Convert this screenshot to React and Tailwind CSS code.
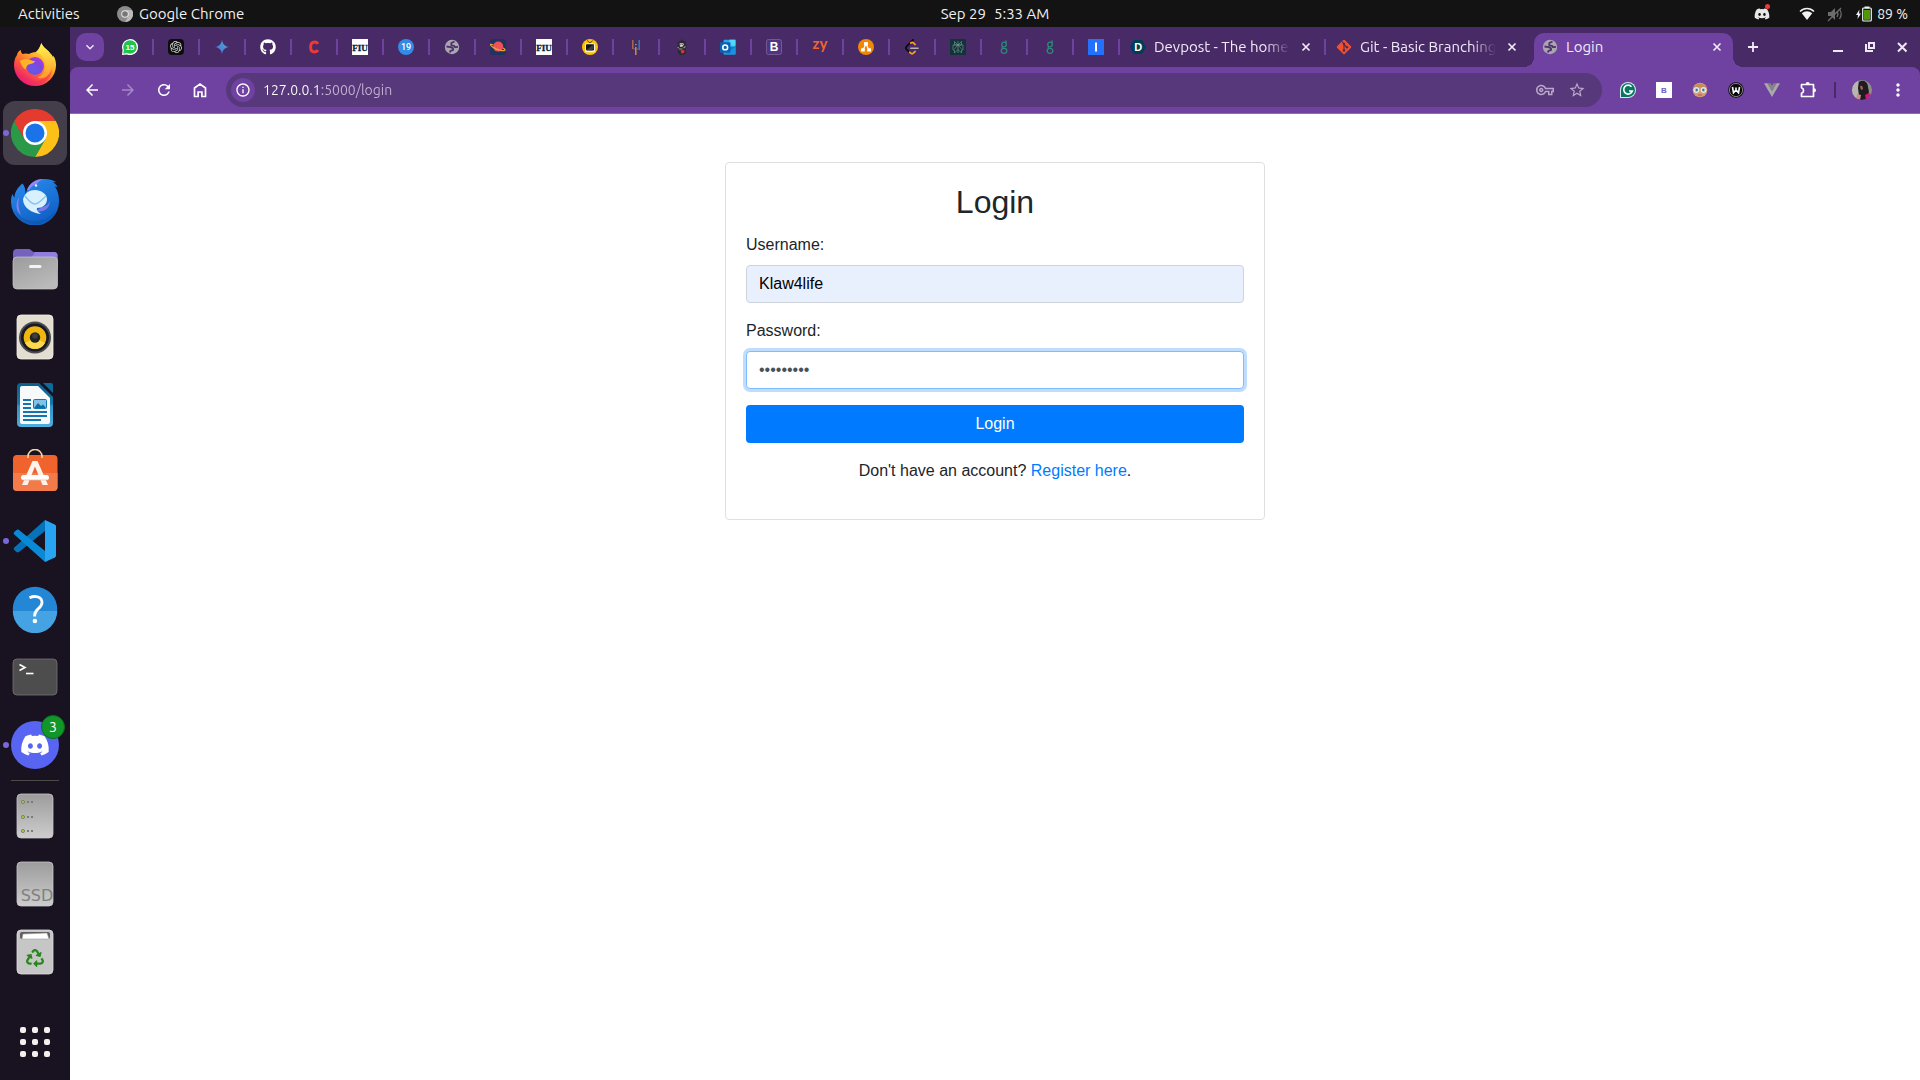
import { FaGithub, FaDiscord, FaRecycle } from "react-icons/fa"
import { SiOpenai } from "react-icons/si"
import {
  MdArrowBack,
  MdArrowForward,
  MdRefresh,
  MdStarBorder,
  MdMoreVert,
  MdOutlineVpnKey,
  MdInfoOutline,
  MdKeyboardArrowDown,
} from "react-icons/md"

const uiFont = "font-['Ubuntu','Noto_Sans',sans-serif]"
const pageFont = "font-['Liberation_Sans',Arial,sans-serif]"

/* favicons */

function WhatsApp() {
  return (
    <svg viewBox="0 0 16 16" className="size-4">
      <path d="M0 16l.6-5A8 8 0 1 1 5 15.500z" fill="#fff" />
      <circle cx="8" cy="8" r="6.800" fill="#1fc24a" />
      <path d="M1.300 14.800l.6-4 3.200 3.200z" fill="#1fc24a" />
      <text x="8" y="11" textAnchor="middle" fontSize="8" fontWeight="700" fontFamily="'Liberation Sans', sans-serif" fill="#fff">15</text>
    </svg>
  )
}

function ChatGpt() {
  return (
    <span className="flex size-4 items-center justify-center rounded-sm bg-[#0d0d10]">
      <SiOpenai className="size-3 text-[#d8d8d8]" />
    </span>
  )
}

function Gemini() {
  return (
    <svg viewBox="0 0 16 16" className="size-4">
      <defs>
        <linearGradient id="gem" x1="0" y1="1" x2="1" y2="0">
          <stop offset="0.2" stopColor="#4f78dc" />
          <stop offset="0.9" stopColor="#4aa9c9" />
        </linearGradient>
      </defs>
      <path d="M8 1C8.800 5.300 10.700 7.200 15 8 10.700 8.800 8.800 10.700 8 15 7.200 10.700 5.300 8.800 1 8 5.300 7.200 7.200 5.300 8 1z" fill="url(#gem)" />
    </svg>
  )
}

function Github() {
  return <FaGithub className="size-4 text-white" />
}

function Coursera() {
  return (
    <svg viewBox="0 0 16 16" className="size-4">
      <path d="M12 4.800C11 3.300 9.800 3 8.600 3 6 3 4.600 5.200 4.600 8s1.400 5 4 5c1.300 0 2.500-.5 3.400-1.800" fill="none" stroke="#ec3a35" strokeWidth="3" />
    </svg>
  )
}

function Fiu() {
  return (
    <svg viewBox="0 0 16 16" className="size-4">
      <rect width="16" height="16" fill="#fff" />
      <text x="8" y="11.500" textAnchor="middle" fontSize="9" fontWeight="700" fontFamily="'Liberation Serif', serif" fill="#081e3f" stroke="#081e3f" strokeWidth=".3">FIU</text>
    </svg>
  )
}

function Nineteen() {
  return (
    <svg viewBox="0 0 16 16" className="size-4">
      <circle cx="8" cy="8" r="8" fill="#318ce7" />
      <text x="8" y="11.200" textAnchor="middle" fontSize="9" fontWeight="500" fontFamily="Roboto, sans-serif" fill="#fff">19</text>
    </svg>
  )
}

function Globe() {
  return (
    <svg viewBox="0 0 16 16" className="size-4">
      <circle cx="8" cy="8" r="7.200" fill="#a9a7ad" />
      <path
        d="M10.500 2.500L7.300 4v2.300l2.700.5 1 1.400 3-.4M2.500 7.500l4 .6L9 9.300v1.900l-2.500.6-.7 1.700"
        fill="none"
        stroke="#4f2f70"
        strokeWidth="1.800"
        strokeLinejoin="round"
      />
    </svg>
  )
}

function Planet() {
  return (
    <svg viewBox="0 0 16 16" className="size-4">
      <rect width="16" height="16" rx="3" fill="#20335f" />
      <circle cx="8.200" cy="7.600" r="5" fill="#f0525a" />
      <path d="M3.300 6C1.200 5 .3 5 .5 5.800c.4 1.600 5.600 4.700 10 5.600 3 .6 4.800.3 4.500-.6-.2-.6-1-1.100-2-1.700" fill="none" stroke="#e8a23c" strokeWidth="1.200" />
    </svg>
  )
}

function Tv() {
  return (
    <svg viewBox="0 0 16 16" className="size-4">
      <circle cx="8" cy="8" r="8" fill="#fbc304" />
      <path d="M5.300 1.500L8 4.200l2.700-2.700" fill="none" stroke="#3c3524" strokeWidth="1" />
      <rect x="3" y="4.200" width="10" height="9" rx="1.500" fill="#f4f0e2" />
      <rect x="4" y="5.200" width="8" height="6.200" rx=".8" fill="#151515" />
      <path d="M4.300 11L11.700 5.500v4.300L10 11.200z" fill="#3d3d3d" />
    </svg>
  )
}

function Bars() {
  return (
    <svg viewBox="0 0 16 16" className="size-4">
      <path d="M4.800 1v9" stroke="#b07845" strokeWidth="1.300" />
      <path d="M7.800 5v1.300M7.800 8v8" stroke="#c98b4c" strokeWidth="1.500" />
      <path d="M11.200 1v10" stroke="#2186c4" strokeWidth="1.500" />
      <path d="M5.500 10h1.500M9 10h1.500" stroke="#7a6a8a" strokeWidth="1" />
    </svg>
  )
}

function Figure() {
  return (
    <svg viewBox="0 0 16 16" className="size-4">
      <path d="M8 0l1.300 2 2.700.5-.5 3 1.500 2.800-1.800 1.500 1.300 3.700L9.500 16H6l-2.500-2.500L4.800 10 2.500 8.500 4 6 3.300 3l3.200-.8z" fill="#2c2930" />
      <path d="M5.600 4.300h3.800l.5 1.500-1.500 2H6z" fill="#d8d5d8" />
      <path d="M6.500 5.600h.8M8.300 5.600h.8" stroke="#222" />
      <path d="M5 10h3.500M9.500 9l2-1.500M3.500 8.200l1.300.8" stroke="#9b949b" strokeWidth="1.200" />
      <path d="M6.500 11.300h4.200L10 14l-2.500.4z" fill="#d33a3c" />
    </svg>
  )
}

function Outlook() {
  return (
    <svg viewBox="0 0 16 16" className="size-4">
      <rect x="3.500" y="0.700" width="12" height="14.800" rx="1" fill="#28a8ea" />
      <path d="M9.500.7h6v6h-6z" fill="#50d9ff" />
      <path d="M4 8l11.500 7.500V8z" fill="#0f7ccb" />
      <path d="M4 15.500L15.500 8v7.500z" fill="#1b90df" />
      <rect x="0" y="3.200" width="10.500" height="10.500" rx="1" fill="#0a62b6" />
      <circle cx="5.200" cy="8.400" r="2.400" fill="none" stroke="#fff" strokeWidth="1.600" />
    </svg>
  )
}

function Bootstrap() {
  return (
    <svg viewBox="0 0 16 16" className="size-4">
      <rect x=".5" y=".5" width="15" height="15" rx="2" fill="#513480" stroke="#7c6499" strokeWidth="0.800" />
      <text x="8" y="12.300" textAnchor="middle" fontSize="12" fontWeight="700" fontFamily="'Liberation Sans', sans-serif" fill="#fff">B</text>
    </svg>
  )
}

function Zy() {
  return (
    <svg viewBox="0 0 16 16" className="size-4 overflow-visible">
      <text x="8" y="10" textAnchor="middle" fontSize="15" fontWeight="700" fontFamily="Lato, sans-serif" fill="#f0652a">zy</text>
    </svg>
  )
}

function Diagrams() {
  return (
    <svg viewBox="0 0 16 16" className="size-4">
      <circle cx="8" cy="8" r="8" fill="#f08705" />
      <path d="M8 5L5 11M8 5l3 6" stroke="#fff" strokeWidth="1.200" />
      <rect x="6" y="3" width="4" height="3.500" rx=".5" fill="#fff" />
      <rect x="3" y="9.200" width="3.800" height="3.300" rx=".5" fill="#fff" />
      <rect x="9.200" y="9.200" width="3.800" height="3.300" rx=".5" fill="#fff" />
    </svg>
  )
}

function LeetCode() {
  return (
    <svg viewBox="0 0 16 16" className="size-4">
      <path d="M9 1L2.500 7.500c-.7.800-.7 2 0 2.800l3 3" fill="none" stroke="#0d0a12" strokeWidth="1.800" strokeLinecap="round" />
      <path d="M6.800 4c1-.8 2-.7 2.900.1L11 5.500M5.800 13.300l.6.600c.9.900 2.400.9 3.300 0l1.300-1.400" fill="none" stroke="#ffa116" strokeWidth="1.800" strokeLinecap="round" />
      <path d="M6.800 9.300H14" stroke="#b3b3b3" strokeWidth="1.600" strokeLinecap="round" />
    </svg>
  )
}

function Perplexity() {
  return (
    <svg viewBox="0 0 16 16" className="size-4">
      <rect width="16" height="16" fill="#123338" />
      <path d="M8 2v12M4.500 2.500L8 6l3.500-3.500V6h-7zM3 6h10v5h-1.500v3L8 10.500 4.500 14v-3H3zM4.500 10L8 6l3.500 4" fill="none" stroke="#7c9b98" strokeWidth="0.600" />
    </svg>
  )
}

function GreenG() {
  return (
    <svg viewBox="0 0 16 16" className="size-4">
      <g fill="none" stroke="#2b8a7c" strokeWidth="1.300">
        <circle cx="8" cy="5.500" r="2.300" />
        <path d="M9.500 3.800L10.300 1.500M9.800 2.800h1M6.800 7.600c-1 .8-.9 1.400.2 1.900" />
        <ellipse cx="8" cy="11.800" rx="2.800" ry="2.500" />
      </g>
    </svg>
  )
}

function Indeed() {
  return (
    <svg viewBox="0 0 16 16" className="size-4">
      <rect width="16" height="16" fill="#2470ff" />
      <rect x="7" y="3.500" width="2" height="9" fill="#fff" />
    </svg>
  )
}

function Devpost() {
  return (
    <svg viewBox="0 0 16 16" className="size-4 shrink-0">
      <path d="M4 1h8l4 7-4 7H4L0 8z" fill="#003e54" />
      <text x="8.200" y="12" textAnchor="middle" fontSize="11" fontWeight="700" fontFamily="'Liberation Sans', sans-serif" fill="#fff">D</text>
    </svg>
  )
}

function Git() {
  return (
    <svg viewBox="0 0 16 16" className="size-4 shrink-0">
      <rect x="2.600" y="2.600" width="10.800" height="10.800" rx="1" transform="rotate(45 8 8)" fill="#f1502f" />
      <path d="M6 2.500L8 5v6.500M8 5.500l3 2.800" fill="none" stroke="#4b2a52" strokeWidth="1.100" />
      <circle cx="8" cy="5" r="1.200" fill="#4b2a52" />
      <circle cx="8" cy="11.500" r="1.300" fill="#4b2a52" />
      <circle cx="11" cy="8.300" r="1.200" fill="#4b2a52" />
    </svg>
  )
}

const pinnedTabs = [
  { name: "WhatsApp", Icon: WhatsApp },
  { name: "ChatGPT", Icon: ChatGpt },
  { name: "Gemini", Icon: Gemini },
  { name: "GitHub", Icon: Github },
  { name: "Coursera", Icon: Coursera },
  { name: "FIU", Icon: Fiu },
  { name: "Calendar", Icon: Nineteen },
  { name: "Site", Icon: Globe },
  { name: "Planet", Icon: Planet },
  { name: "FIU Portal", Icon: Fiu },
  { name: "TV", Icon: Tv },
  { name: "Bars", Icon: Bars },
  { name: "Figure", Icon: Figure },
  { name: "Outlook", Icon: Outlook },
  { name: "Bootstrap", Icon: Bootstrap },
  { name: "zyBooks", Icon: Zy },
  { name: "Diagrams", Icon: Diagrams },
  { name: "LeetCode", Icon: LeetCode },
  { name: "Perplexity", Icon: Perplexity },
  { name: "Grepper", Icon: GreenG },
  { name: "Grepper 2", Icon: GreenG },
  { name: "Indeed", Icon: Indeed },
]

/* dock icons */

function Firefox() {
  return (
    <svg viewBox="0 0 48 48" className="size-12">
      <defs>
        <linearGradient id="ffBody" x1="0.85" y1="0.1" x2="0.25" y2="0.95">
          <stop offset="0" stopColor="#fff04a" />
          <stop offset="0.35" stopColor="#ffb02a" />
          <stop offset="0.65" stopColor="#ff5f35" />
          <stop offset="1" stopColor="#e8157c" />
        </linearGradient>
        <linearGradient id="ffTail" x1="0" y1="0" x2="0" y2="1">
          <stop offset="0" stopColor="#fff44f" />
          <stop offset="1" stopColor="#ff9a2b" />
        </linearGradient>
        <radialGradient id="ffCore" cx="0.4" cy="0.75" r="0.8">
          <stop offset="0" stopColor="#5f5be8" />
          <stop offset="0.6" stopColor="#8146dd" />
          <stop offset="1" stopColor="#b633e0" />
        </radialGradient>
      </defs>
      <path d="M6 14c.3-2 1.300-4 3.800-5 .2 2 .7 3 1.700 4 2-.8 4.500-.8 6.500 0 1.800-1 4-2 7-2 4-3 4-6 5.500-9 1.500 5 5.500 6 8 9.500C41 14 41.500 15 42 16c.3-.3.300-1 .2-1.500C44.500 18 45 21 45 24.500A21 20.500 0 0 1 3 24.500C3 20 4 16.500 6 14z" fill="url(#ffBody)" />
      <path d="M25 11c3-2.500 4-6 5.500-9 1.500 5 5.500 6 8 9.500 4 6.500 3.500 18-3 24-3 2-7 2-9 1 8-3 9-12 6-19-1.500-3.500-4-5-7.500-6.500z" fill="url(#ffTail)" />
      <circle cx="24" cy="25" r="9" fill="url(#ffCore)" />
      <path d="M9 20c3-2 6-2.500 9-1.500 2 .8 3.500 1.500 6 1.500-.5 2.500-4 3-6.500 3.500-2 1-2.500 3-2.500 5-2.500-1-5-4-6-8.500z" fill="#ffb224" />
      <path d="M5 29c4 9 12 13 21 11 7-1 13-6 15-12-1 10-8 16-17 16S6.500 38 5 29z" fill="#f62d5a" opacity=".55" />
    </svg>
  )
}

function Chrome() {
  return (
    <svg viewBox="0 0 48 48" className="size-12">
      <path d="M24 24L3.200 12A24 24 0 0 1 44.800 12z" fill="#e33b2e" />
      <path d="M24 12h20.800A24 24 0 0 1 24 48l10.400-18z" fill="#fcc016" />
      <path d="M3.200 12A24 24 0 0 0 24 48l10.400-18-10.400 6-10.400-6z" fill="#2a9a48" />
      <path d="M3.200 12h22v12H13.600V30z" fill="#e33b2e" />
      <path d="M3.200 12L13.600 30 20 24z" fill="#e33b2e" />
      <circle cx="24" cy="24" r="12" fill="#fff" />
      <circle cx="24" cy="24" r="9.500" fill="#1a73e8" />
    </svg>
  )
}

function Thunderbird() {
  return (
    <svg viewBox="0 0 48 48" className="size-12">
      <defs>
        <linearGradient id="tb" x1="0" y1="0" x2="0.5" y2="1">
          <stop offset="0" stopColor="#2b8ff0" />
          <stop offset="1" stopColor="#1060c4" />
        </linearGradient>
      </defs>
      <path d="M16 13C19 5 26 2 33 2c5 0 9 1 12 3l-3 .5c2 .8 3.500 2.500 4.500 4.500l-2.500-.5c3 4.500 4 9 4 14.500a24 24 0 0 1-48 1C0 21 .5 19 1.500 17c.5 1.500 1 2.500 2 3.500 0-5 3-10 8-14 2.500 3 3.500 7 2.500 11z" fill="url(#tb)" />
      <path d="M16 13C19 5 26 2 33 2c-4 1-6 3-7 5-3 .5-6 2.500-8 6z" fill="#9a83f2" />
      <path d="M8 20c-4 7-3 14 2 18-3-6-3-12-2-18z" fill="#8d7cf0" />
      <path d="M31 30c4-.5 7-3 8-6-.5 8-7 12-14 10z" fill="#7d78ea" />
      <path d="M12 22c2-6 6-9 12-9s12 4 12 9c0 6-5 9-10 9-1 2 1 4 4 6-9-1-18-6-18-15z" fill="#d9f0ff" />
      <path d="M14 19c3 4 7 8 10 8s7-4 11-8" fill="none" stroke="#8ac2ee" strokeWidth="1.300" />
      <circle cx="25" cy="8.500" r="1.200" fill="#e8f6ff" />
      <path d="M3 32c5 9 13 12 21 12s17-4 21-12c-3 10-12 15.500-21 15.500S6 42 3 32z" fill="#0b4fa8" opacity=".5" />
    </svg>
  )
}

function Files() {
  return (
    <svg viewBox="0 0 48 48" className="size-12">
      <defs>
        <linearGradient id="fl" x1="0" y1="0" x2="0.6" y2="1">
          <stop offset="0" stopColor="#9b9b9b" />
          <stop offset="1" stopColor="#bababa" />
        </linearGradient>
      </defs>
      <path d="M2 8a4 4 0 0 1 4-4h12c2 0 3 3 5 3h20a3.500 3.500 0 0 1 3.500 3.500V24H2z" fill="#7461c0" />
      <path d="M24 7h19a3.500 3.500 0 0 1 3.500 3.500V20H16z" fill="#8f7de0" />
      <rect x="2" y="12" width="44.500" height="32" rx="4" fill="url(#fl)" stroke="#c9c9c9" strokeWidth=".7" />
      <rect x="18" y="20" width="12.500" height="3" rx="1.500" fill="#f4f4f4" />
    </svg>
  )
}

function Rhythmbox() {
  return (
    <svg viewBox="0 0 48 48" className="size-12">
      <rect x="6" y="2" width="36" height="44" rx="4" fill="#e4ded1" stroke="#f4f1ea" strokeWidth=".8" />
      <circle cx="24" cy="24.500" r="16" fill="#4a4a50" />
      <circle cx="24" cy="24.500" r="14" fill="#1a1a22" />
      <circle cx="24" cy="24.500" r="11.300" fill="#f0b80f" />
      <path d="M14 30a11.300 11.300 0 0 0 20 0l-10-5z" fill="#fad94c" />
      <circle cx="24" cy="24.500" r="5.200" fill="#222" />
      <circle cx="24" cy="23" r="2.800" fill="#3f3f3f" />
    </svg>
  )
}

function Writer() {
  return (
    <svg viewBox="0 0 48 48" className="size-12">
      <defs>
        <linearGradient id="wr" x1="0" y1="0" x2="0" y2="1">
          <stop offset="0" stopColor="#0a5f8c" />
          <stop offset="0.48" stopColor="#1579ab" />
          <stop offset="0.52" stopColor="#2f93c5" />
          <stop offset="1" stopColor="#4eaedd" />
        </linearGradient>
      </defs>
      <path d="M10 2h18l14 14v26a4 4 0 0 1-4 4H10a4 4 0 0 1-4-4V6a4 4 0 0 1 4-4z" fill="url(#wr)" />
      <path d="M32 2h8a2 2 0 0 1 2 2v8z" fill="#0e6a9b" />
      <path d="M11 5h16l12 12v24a2 2 0 0 1-2 2H11a2 2 0 0 1-2-2V7a2 2 0 0 1 2-2z" fill="#f7f9fa" />
      <path d="M12 19h8M12 23h8M12 27h8M12 31h24M12 35h24M12 39h18" stroke="#1177b0" strokeWidth="2" />
      <rect x="22.500" y="18.500" width="13" height="9" rx="1" fill="#7fc3e8" stroke="#1177b0" />
      <path d="M23 27l4-5 3 3 2-1.500L35 27z" fill="#0d6da3" />
    </svg>
  )
}

function Software() {
  return (
    <svg viewBox="0 0 48 48" className="size-12">
      <rect x="2" y="6" width="44.500" height="36" rx="4" fill="#f0632d" />
      <path d="M2 24h44.500v14a4 4 0 0 1-4 4H6a4 4 0 0 1-4-4z" fill="#f37a49" />
      <path d="M17 9V7.500a7 7 0 0 1 14 0V9" fill="none" stroke="#f2d9a0" strokeWidth="1.600" />
      <path d="M21.500 12h5L37 36h-5.500L24 17.500 16.500 36H11z" fill="#fdf3ec" />
      <rect x="10" y="26" width="28" height="5" rx="2.500" fill="#fff" />
      <path d="M12 31h24" stroke="#e4bda9" strokeWidth=".8" />
    </svg>
  )
}

function VsCode() {
  return (
    <svg viewBox="0 0 48 48" className="size-12">
      <path d="M34 3v11L8 35c-1 .7-1.800.6-2.500 0L3.300 33c-.8-.8-.8-1.800 0-2.500z" fill="#0672ba" />
      <path d="M34 45V34L8 13c-1-.7-1.800-.6-2.500 0L3.300 15c-.8.800-.8 1.800 0 2.500z" fill="#0a8ad6" />
      <path d="M34 3l9.800 4.500c.8.400 1.200 1 1.200 1.800v29.400c0 .8-.4 1.400-1.200 1.800L34 45z" fill="#27a5f2" />
    </svg>
  )
}

function Help() {
  return (
    <svg viewBox="0 0 48 48" className="size-12">
      <circle cx="24" cy="24" r="22.200" fill="#2487d6" />
      <path d="M1.800 26a22.200 22.200 0 0 0 44.400 0z" fill="#45a3e3" />
      <path d="M18.500 12.800c6-2.800 12.500-.8 12.500 4.700 0 6-7.300 6.300-7.300 12.500v1.500" fill="none" stroke="#fff" strokeWidth="2.800" />
      <circle cx="23.900" cy="36" r="2.300" fill="#fff" />
    </svg>
  )
}

function Terminal() {
  return (
    <svg viewBox="0 0 48 48" className="size-12">
      <rect x="2" y="6" width="44" height="36" rx="4" fill="#4d4d4d" stroke="#757575" strokeWidth=".8" />
      <path d="M8.500 11.500l5.500 3-5.500 3" fill="none" stroke="#fff" strokeWidth="1.600" />
      <path d="M15 20.500h7.500" stroke="#fff" strokeWidth="1.600" />
    </svg>
  )
}

function Discord() {
  return (
    <span className="flex size-12 items-center justify-center rounded-full bg-[#5865f2]">
      <FaDiscord className="size-[30px] text-white" />
    </span>
  )
}

function DriveShape() {
  return (
    <>
      <defs>
        <linearGradient id="dr" x1="0" y1="0" x2="0" y2="1">
          <stop offset="0" stopColor="#9c9c9c" />
          <stop offset="1" stopColor="#cdcdcd" />
        </linearGradient>
      </defs>
      <rect x="6" y="2" width="36" height="44" rx="4" fill="url(#dr)" stroke="#c6c6c6" strokeWidth=".8" />
    </>
  )
}

function Drive() {
  return (
    <svg viewBox="0 0 48 48" className="size-12">
      <DriveShape />
      {[10, 25, 39].map((y) => (
        <g key={y}>
          <circle cx="12" cy={y} r="1.600" fill="#a5c94a" stroke="#6e7a55" strokeWidth=".8" />
          <path d={`M16 ${y}h2M20 ${y}h2`} stroke="#7b7b7b" strokeWidth="1.800" />
        </g>
      ))}
    </svg>
  )
}

function Ssd() {
  return (
    <svg viewBox="0 0 48 48" className="size-12">
      <DriveShape />
      <text x="26" y="41" textAnchor="middle" fontSize="16" fontFamily="'DejaVu Sans', sans-serif" fill="#808080">SSD</text>
    </svg>
  )
}

function Trash() {
  return (
    <div className="relative">
      <svg viewBox="0 0 48 48" className="size-12">
        <rect x="6" y="2" width="36" height="44" rx="4" fill="#c6c6c6" stroke="#dedede" strokeWidth=".8" />
        <rect x="9" y="4" width="30" height="7" rx="2" fill="#5e5e5e" />
        <path d="M11 11l1-5 24-1 2 6z" fill="#fff" stroke="#9d9d9d" strokeWidth=".6" />
      </svg>
      <FaRecycle className="absolute top-[21px] left-[15px] size-[18px] text-[#27871b]" />
    </div>
  )
}

const dockApps = [
  { name: "Firefox", Icon: Firefox },
  { name: "Google Chrome", Icon: Chrome, running: true, active: true },
  { name: "Thunderbird", Icon: Thunderbird },
  { name: "Files", Icon: Files },
  { name: "Rhythmbox", Icon: Rhythmbox },
  { name: "LibreOffice Writer", Icon: Writer },
  { name: "Software", Icon: Software },
  { name: "Visual Studio Code", Icon: VsCode, running: true },
  { name: "Help", Icon: Help },
  { name: "Terminal", Icon: Terminal },
  { name: "Discord", Icon: Discord, running: true, badge: "3" },
]

const dockPlaces = [
  { name: "Drive", Icon: Drive },
  { name: "SSD", Icon: Ssd },
  { name: "Trash", Icon: Trash },
]

function DockItem({ name, Icon, running, active, badge }) {
  return (
    <button
      type="button"
      aria-label={name}
      className={`relative flex size-16 items-center justify-center rounded-xl ${active ? "bg-[#443d4a]" : ""}`}
    >
      {running && <span className="absolute top-[29px] left-0 size-1.5 rounded-full bg-[#7b67da]" />}
      <Icon />
      {badge && (
        <span className="absolute top-0.5 right-0.5 flex size-6 items-center justify-center rounded-full border border-[#0b6e1b] bg-[#12962a] text-sm text-white">
          {badge}
        </span>
      )}
    </button>
  )
}

function Dock() {
  return (
    <nav className="flex w-[70px] shrink-0 flex-col items-center bg-[#191221] py-1.5">
      <div className="flex flex-col gap-1">
        {dockApps.map((app) => (
          <DockItem key={app.name} {...app} />
        ))}
      </div>
      <hr className="my-[3px] w-12 border-[#4d4a48]" />
      <div className="flex flex-col gap-1">
        {dockPlaces.map((place) => (
          <DockItem key={place.name} {...place} />
        ))}
      </div>
      <button type="button" aria-label="Show Applications" className="mt-auto flex size-16 items-center justify-center">
        <span className="grid grid-cols-3 gap-1.5">
          {[1, 2, 3, 4, 5, 6, 7, 8, 9].map((n) => (
            <span key={n} className="size-1.5 rounded-[2px] bg-[#f2f1ee]" />
          ))}
        </span>
      </button>
    </nav>
  )
}

function TopBar() {
  return (
    <header className="grid h-[27px] grid-cols-[70px_1fr_auto_1fr] items-center bg-[#131313] text-[15px] leading-5 text-[#f0f0f0]">
      <span className="pl-[18px] whitespace-nowrap">Activities</span>
      <div className="flex items-center gap-1.5 pl-[47px]">
        <svg viewBox="0 0 16 16" className="size-4">
          <circle cx="8" cy="8" r="8" fill="#8b8b8b" />
          <path d="M8 4h7A8 8 0 0 1 8 16l3.500-6z" fill="#b9b9b9" />
          <circle cx="8" cy="8" r="3.800" fill="#e6e6e6" />
          <circle cx="8" cy="8" r="2.800" fill="#777" />
        </svg>
        <span>Google Chrome</span>
      </div>
      <div className="flex gap-2">
        <span>Sep 29</span>
        <span>5:33 AM</span>
      </div>
      <div className="flex items-center justify-end pr-3">
        <span className="relative mr-[29px]">
          <FaDiscord className="size-4 text-[#e8e8e8]" />
          <span className="absolute -top-0.5 right-0 size-[5px] rounded-full bg-[#ea3b3b]" />
        </span>
        <svg viewBox="0 0 16 16" className="mr-3 size-4">
          <path d="M1 5.500C5 1.500 11 1.500 15 5.500" fill="none" stroke="#f2f2f2" strokeWidth="1.500" />
          <path d="M2.800 7.300C5.800 4.600 10.200 4.600 13.200 7.300L8 14z" fill="#f2f2f2" />
        </svg>
        <svg viewBox="0 0 16 16" className="mr-3 size-4">
          <path d="M1 6h3l4-4v12l-4-4H1z" fill="#6c6c6c" />
          <path d="M10 5c1.200 2 1.200 4 0 6M12.500 3c2 3 2 7 0 10M1 15L14 2" fill="none" stroke="#6c6c6c" strokeWidth="1.300" />
        </svg>
        <svg viewBox="0 0 18 16" className="mr-1 h-4 w-[18px]">
          <path d="M4.500 3.500L1 9h2l-.5 4L6 7.500H4z" fill="#f2f2f2" />
          <rect x="9.500" y="0.500" width="5" height="2" fill="#f2f2f2" />
          <rect x="7.700" y="2" width="8.600" height="13" rx="1" fill="none" stroke="#f2f2f2" strokeWidth="1.200" />
          <rect x="9" y="4" width="6" height="9.800" fill="#4e9a06" />
        </svg>
        <span className="text-sm">89 %</span>
      </div>
    </header>
  )
}

function CloseIcon() {
  return (
    <svg viewBox="0 0 16 16" className="size-4">
      <path d="M4.500 4.500l7 7M11.500 4.500l-7 7" stroke="#f1eaf7" strokeWidth="1.700" />
    </svg>
  )
}

function Tab({ title, Icon, separator }) {
  return (
    <div className="flex w-[206px] items-center pl-2.5">
      <Icon />
      <span className="ml-2 w-[136px] shrink-0 whitespace-nowrap [mask-image:linear-gradient(90deg,#000_82%,transparent)]">
        {title}
      </span>
      <button type="button" aria-label={`Close ${title}`} className="ml-2">
        <CloseIcon />
      </button>
      {separator && <span className="ml-auto h-4 w-0.5 bg-[#6f41a1]" />}
    </div>
  )
}

function TabStrip() {
  return (
    <div className="flex h-10 bg-[#482a66] pl-1.5 text-[15px] leading-5 text-[#f1eaf7]">
      <button
        type="button"
        aria-label="Search tabs"
        className="mt-1.5 mr-1 flex size-7 items-center justify-center rounded-[10px] bg-[#6f41a1]"
      >
        <MdKeyboardArrowDown className="size-4" />
      </button>
      <div className="flex">
        {pinnedTabs.map(({ name, Icon }) => (
          <button key={name} type="button" aria-label={name} className="flex w-[46px] items-center">
            <span className="flex flex-1 justify-center">
              <Icon />
            </span>
            <span className="h-4 w-0.5 bg-[#6f41a1]" />
          </button>
        ))}
        <Tab title="Devpost - The home" Icon={Devpost} separator />
        <Tab title="Git - Basic Branching" Icon={Git} />
      </div>
      <div className="relative mt-1.5 ml-0.5 flex h-[34px] w-[199px] items-center rounded-t-[10px] bg-[#6f41a1] pr-2 pb-1.5 pl-2">
        <span className="absolute bottom-0 -left-2.5 size-2.5 bg-[radial-gradient(circle_at_0_0,#482a66_10px,#6f41a1_10px)]" />
        <span className="absolute -right-2.5 bottom-0 size-2.5 bg-[radial-gradient(circle_at_100%_0,#482a66_10px,#6f41a1_10px)]" />
        <Globe />
        <span className="ml-2">Login</span>
        <button type="button" aria-label="Close Login" className="ml-auto">
          <CloseIcon />
        </button>
      </div>
      <div className="flex flex-1 items-center pr-2.5 pl-3">
        <button type="button" aria-label="New tab">
          <svg viewBox="0 0 16 16" className="size-4">
            <path d="M8 3v10M3 8h10" stroke="#f1eaf7" strokeWidth="1.800" />
          </svg>
        </button>
        <div className="ml-auto flex items-center gap-4">
          <button type="button" aria-label="Minimize">
            <svg viewBox="0 0 16 16" className="size-4">
              <path d="M3 12h10" stroke="#efe8f5" strokeWidth="2" />
            </svg>
          </button>
          <button type="button" aria-label="Restore">
            <svg viewBox="0 0 16 16" className="size-4">
              <path d="M7 4h5v5H7z" fill="none" stroke="#efe8f5" strokeWidth="2" />
              <path d="M4 5v7h7" fill="none" stroke="#efe8f5" strokeWidth="2" />
            </svg>
          </button>
          <button type="button" aria-label="Close window">
            <svg viewBox="0 0 16 16" className="size-4">
              <path d="M4 4l8.500 8.500M12.500 4L4 12.500" stroke="#efe8f5" strokeWidth="2" />
            </svg>
          </button>
        </div>
      </div>
    </div>
  )
}

function Grammarly() {
  return (
    <svg viewBox="0 0 16 16" className="size-4">
      <path d="M8 0a8 8 0 1 1 0 16H0V8a8 8 0 0 1 8-8z" fill="#d8e9e4" />
      <path d="M8 1a7 7 0 1 1 0 14H1V8a7 7 0 0 1 7-7z" fill="#067862" />
      <path d="M11.500 4.800A4.400 4.400 0 1 0 12.300 9H9" fill="none" stroke="#fff" strokeWidth="1.700" />
    </svg>
  )
}

function BootstrapExt() {
  return (
    <svg viewBox="0 0 16 16" className="size-4">
      <rect width="16" height="16" fill="#fff" />
      <text x="8" y="11" textAnchor="middle" fontSize="8" fontWeight="700" fontFamily="'Liberation Sans', sans-serif" fill="#6a5cc0">B</text>
    </svg>
  )
}

function Face() {
  return (
    <svg viewBox="0 0 16 16" className="size-4">
      <circle cx="8" cy="8" r="7.300" fill="#d99a73" />
      <path d="M1 7a7.300 7.300 0 0 1 14 0C11 4.500 5 4.500 1 7z" fill="#c68d58" />
      <circle cx="4.400" cy="8" r="2.500" fill="#9cc6d8" stroke="#f5f5f5" />
      <circle cx="11.600" cy="8" r="2.500" fill="#9cc6d8" stroke="#f5f5f5" />
      <circle cx="4.800" cy="8" r="1" fill="#356d85" />
      <circle cx="11.200" cy="8" r="1" fill="#356d85" />
      <path d="M6 13h4" stroke="#a85b4a" />
    </svg>
  )
}

function Wappalyzer() {
  return (
    <svg viewBox="0 0 16 16" className="size-4">
      <circle cx="8" cy="8" r="7.800" fill="#0a0a0a" />
      <circle cx="8" cy="8" r="6.600" fill="none" stroke="#d0d0d0" strokeWidth=".6" />
      <path d="M4.500 5l1 5.800L8 8l2.500 2.800 1-5.800M8 5.500V8" fill="none" stroke="#fff" strokeWidth="1.600" />
    </svg>
  )
}

function Vue() {
  return (
    <svg viewBox="0 0 16 16" className="size-4">
      <path d="M0 1.200h3.500L8 9l4.500-7.800H16L8 15z" fill="#a9a9a9" />
      <path d="M3.500 1.200h3L8 3.800l1.500-2.600h3L8 9z" fill="#858585" />
    </svg>
  )
}

function Puzzle() {
  return (
    <svg viewBox="0 0 18 18" className="size-[18px]">
      <path d="M2.500 3.500h12v12h-12v-3.300a2.800 2.800 0 0 0 0-5.400z" fill="none" stroke="#fff" strokeWidth="1.700" strokeLinejoin="round" />
      <path d="M6.700 3a2 2 0 0 1 4 0zM15 7.300a2 2 0 0 1 0 4z" fill="#fff" />
    </svg>
  )
}

const extensions = [
  { name: "Grammarly", Icon: Grammarly },
  { name: "Bootstrap", Icon: BootstrapExt },
  { name: "Face", Icon: Face },
  { name: "Wappalyzer", Icon: Wappalyzer },
  { name: "Vue devtools", Icon: Vue },
  { name: "Extensions", Icon: Puzzle },
]

function NavButton({ label, children }) {
  return (
    <button type="button" aria-label={label} className="flex size-9 items-center justify-center">
      {children}
    </button>
  )
}

function Toolbar() {
  return (
    <div className="bg-[#482a66]">
      <div className="flex h-[47px] items-center rounded-t-lg border-b border-[#8f68ba] bg-[#6f41a1] pl-1 text-white">
        <NavButton label="Back">
          <MdArrowBack className="size-[18px]" />
        </NavButton>
        <NavButton label="Forward">
          <MdArrowForward className="size-[18px] text-[#a588c6]" />
        </NavButton>
        <NavButton label="Reload">
          <MdRefresh className="size-[18px]" />
        </NavButton>
        <NavButton label="Home">
          <svg viewBox="0 0 18 18" className="size-[18px]">
            <path d="M3.500 7L9 3l5.500 4v8.500h-3.600V11H7.100v4.500H3.500z" fill="none" stroke="#fff" strokeWidth="1.700" />
          </svg>
        </NavButton>
        <div className="ml-2 flex h-[34px] flex-1 items-center rounded-full bg-[#57387a] pr-4 pl-[5px]">
          <button type="button" aria-label="Site information" className="flex size-6 items-center justify-center rounded-full bg-[#6f41a1]">
            <MdInfoOutline className="size-4" />
          </button>
          <input
            aria-label="Address bar"
            defaultValue="127.0.0.1:5000/login"
            className="ml-2 flex-1 bg-[linear-gradient(90deg,#fff_57px,#c3b2d4_57px)] bg-clip-text text-sm text-transparent outline-none"
          />
          <button type="button" aria-label="Passwords" className="mr-3.5">
            <MdOutlineVpnKey className="size-[18px] text-[#b9a8cb]" />
          </button>
          <button type="button" aria-label="Bookmark">
            <MdStarBorder className="size-[18px] text-[#b9a8cb]" />
          </button>
        </div>
        <div className="ml-2 flex">
          {extensions.map(({ name, Icon }) => (
            <NavButton key={name} label={name}>
              <Icon />
            </NavButton>
          ))}
        </div>
        <span className="mx-2 h-4 w-0.5 bg-[#482a66]" />
        <NavButton label="Profile">
          <svg viewBox="0 0 20 20" className="size-5">
            <defs>
              <clipPath id="av">
                <circle cx="10" cy="10" r="10" />
              </clipPath>
            </defs>
            <g clipPath="url(#av)">
              <rect width="20" height="20" fill="#8e8f86" />
              <path d="M0 0h6v20H0z" fill="#b7b6b2" />
              <path d="M7 2c4-3 9 0 9 5l1 5-3 8H6l1-6-1-6z" fill="#211a20" />
              <path d="M8 6c2-1 3 1 3 3l-2 1z" fill="#9a6c58" />
              <path d="M13 15l4-2 3 3-3 4h-3z" fill="#d0157c" />
              <path d="M5 14l4 1-1 5H4z" fill="#c88f86" />
            </g>
          </svg>
        </NavButton>
        <NavButton label="Menu">
          <MdMoreVert className="size-5" />
        </NavButton>
        <span className="w-1" />
      </div>
    </div>
  )
}

function LoginPage() {
  return (
    <main className={`flex-1 bg-white px-4 pt-12 text-base text-[#212529] ${pageFont}`}>
      <form
        className="mx-auto max-w-[540px] rounded border border-[#dfdfdf] p-5"
        onSubmit={(e) => e.preventDefault()}
      >
        <h2 className="mb-3 text-center text-[32px] leading-[38px] font-medium">Login</h2>
        <label htmlFor="username" className="mb-2 block">
          Username:
        </label>
        <input
          id="username"
          type="text"
          defaultValue="Klaw4life"
          className="mb-4 block h-[38px] w-full rounded border border-[#ced4da] bg-[#e8f0fe] px-3 text-black"
        />
        <label htmlFor="password" className="mb-2 block">
          Password:
        </label>
        <input
          id="password"
          type="password"
          defaultValue="klaw4life"
          className="mb-4 block h-[38px] w-full rounded border border-[#80bdff] bg-white px-3 text-[#495057] ring-3 ring-[#007bff]/25 outline-none"
        />
        <button type="submit" className="h-[38px] w-full rounded bg-[#007bff] text-white">
          Login
        </button>
        <p className="my-4 text-center">
          Don't have an account?{" "}
          <a href="#register" className="text-[#007bff]">
            Register here
          </a>
          .
        </p>
      </form>
    </main>
  )
}

function App() {
  return (
    <div className={`flex min-h-screen flex-col ${uiFont}`}>
      <TopBar />
      <div className="flex flex-1">
        <Dock />
        <div className="flex min-w-0 flex-1 flex-col">
          <TabStrip />
          <Toolbar />
          <LoginPage />
        </div>
      </div>
    </div>
  )
}

export default App
